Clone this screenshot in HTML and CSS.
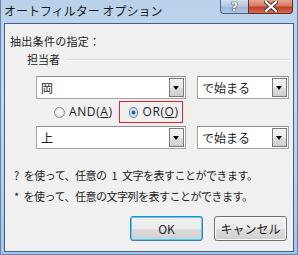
FILE: index.html
```html
<!DOCTYPE html>
<html lang="ja">

<head>
    <meta charset="UTF-8">
    <meta name="viewport" content="width=device-width, initial-scale=1.0">
    <title>オートフィルター オプション</title>
    <link rel="stylesheet" href="styles.css">
</head>

<body>
    <div class="window">
        <!-- Title bar -->
        <div class="titlebar">
            <span class="title">オートフィルター オプション</span>
            <div class="caption-buttons">
                <div class="cap-btn help">?</div>
                <div class="cap-btn close">
                    <svg width="14" height="11" viewBox="0 0 14 11">
                        <path d="M2 1 L12 10 M12 1 L2 10" stroke="#3a3a3a" stroke-width="4.2" stroke-linecap="square" />
                        <path d="M2 1 L12 10 M12 1 L2 10" stroke="#ffffff" stroke-width="2.2" stroke-linecap="square" />
                    </svg>
                </div>
            </div>
        </div>

        <!-- Client area -->
        <div class="client">
            <p class="label">抽出条件の指定：</p>
            <div class="group-head">
                <span>担当者</span>
                <span class="groove"></span>
            </div>

            <div class="row">
                <div class="combo wide">
                    <span class="value">岡</span>
                    <span class="arrow"></span>
                </div>
                <div class="combo narrow">
                    <span class="value">で始まる</span>
                    <span class="arrow"></span>
                </div>
            </div>

            <div class="radios">
                <label class="radio">
                    <span class="dot"></span>
                    <span>AND(<u>A</u>)</span>
                </label>
                <label class="radio checked highlight">
                    <span class="dot"></span>
                    <span>OR(<u>O</u>)</span>
                </label>
            </div>

            <div class="row">
                <div class="combo wide">
                    <span class="value">上</span>
                    <span class="arrow"></span>
                </div>
                <div class="combo narrow">
                    <span class="value">で始まる</span>
                    <span class="arrow"></span>
                </div>
            </div>

            <div class="notes">
                <p>? を使って、任意の 1 文字を表すことができます。</p>
                <p>* を使って、任意の文字列を表すことができます。</p>
            </div>

            <div class="buttons">
                <button class="btn default">OK</button>
                <button class="btn">キャンセル</button>
            </div>
        </div>
    </div>
</body>

</html>
```

FILE: styles.css
```css
body {
    margin: 0;
    font-family: "Noto Sans CJK JP", "Noto Sans", sans-serif;
    font-size: 11px;
    color: #1e1e1e;
    overflow: hidden;
}

p {
    margin: 0;
}

/* Window frame */
.window {
    width: 298px;
    height: 255px;
    box-sizing: border-box;
    border: 1px solid #5f84b8;
    border-top: none;
    background: linear-gradient(to bottom, #b9d1ea 0%, #c4d8ee 40%, #a9c4e6 100%);
    display: flex;
    flex-direction: column;
}

.titlebar {
    height: 22px;
    display: flex;
    justify-content: space-between;
    align-items: flex-start;
    padding-left: 3px;
}

.title {
    font-size: 12px;
    line-height: 16px;
    margin-top: 3px;
    color: #1b1b1b;
}

.caption-buttons {
    display: flex;
    margin-right: 4px;
}

.cap-btn {
    height: 14px;
    box-sizing: border-box;
    border: 1px solid #4d6488;
    border-top: none;
    display: flex;
    justify-content: center;
    align-items: center;
}

.help {
    width: 28px;
    border-radius: 0 0 0 4px;
    border-right: none;
    background: linear-gradient(to bottom, #d3e0f0 0%, #b3c6e0 50%, #9cb4d6 51%, #b0c6e3 100%);
    color: #ffffff;
    font-family: "DejaVu Sans", sans-serif;
    font-weight: bold;
    font-size: 12px;
    line-height: 12px;
    text-shadow: 0 0 1px #2d3b52, 0 0 1px #2d3b52, 0 0 1px #2d3b52;
}

.close {
    width: 45px;
    border-radius: 0 0 4px 0;
    background: linear-gradient(to bottom, #e8a593 0%, #d77a62 45%, #c0402a 55%, #d4694f 100%);
    border-color: #6e2a22;
}

.client {
    flex: 1;
    margin: 1px 3px 2px 3px;
    border: 1px solid #3f5f8e;
    background: #f0f0f0;
    padding: 9px 0 0 5px;
}

.label {
    line-height: 16px;
    letter-spacing: 0.3px;
}

.group-head {
    display: flex;
    align-items: center;
    margin-top: 2px;
    padding-left: 17px;
    line-height: 16px;
}

.groove {
    flex: 1;
    height: 0;
    border-top: 1px solid #d5dfe5;
    border-bottom: 1px solid #ffffff;
    margin: 2px 3px 0 6px;
}

/* Combo boxes */
.row {
    display: flex;
    gap: 11px;
    padding-left: 26px;
}

.group-head + .row {
    margin-top: 9px;
}

.combo {
    height: 23px;
    box-sizing: border-box;
    border: 1px solid #a4a4a4;
    border-top-color: #8e8e8e;
    background: #ffffff;
    display: flex;
    align-items: center;
    justify-content: space-between;
    padding: 1px;
}

.wide {
    width: 150px;
}

.narrow {
    width: 92px;
}

.value {
    font-size: 12px;
    padding-left: 3px;
    line-height: 16px;
}

.arrow {
    width: 15px;
    height: 19px;
    box-sizing: border-box;
    border: 1px solid #7a7a7a;
    background: linear-gradient(to bottom, #f2f2f2 0%, #ebebeb 50%, #dddddd 51%, #cfcfcf 100%);
    position: relative;
}

.arrow::after {
    content: "";
    position: absolute;
    left: 3px;
    top: 7px;
    border-left: 3.5px solid transparent;
    border-right: 3.5px solid transparent;
    border-top: 4px solid #000000;
}

/* Radio buttons */
.radios {
    display: flex;
    align-items: center;
    gap: 6px;
    padding-left: 44px;
    margin-top: 2px;
    margin-bottom: 3px;
    height: 22px;
}

.radio {
    display: flex;
    align-items: center;
    gap: 4px;
    font-family: "Open Sans", "Noto Sans", sans-serif;
    font-size: 12px;
    line-height: 16px;
    letter-spacing: 0.6px;
}

.dot {
    width: 11px;
    height: 11px;
    box-sizing: border-box;
    border-radius: 50%;
    border: 1px solid #8f8f8f;
    background: radial-gradient(circle at 50% 40%, #ffffff 0%, #e6e6e6 55%, #cfcfcf 100%);
}

.checked .dot {
    border-color: #5f7f9f;
    background: radial-gradient(circle, #1b75c8 0%, #1c5f9b 25%, #6ea7d6 32%, #e3e9ef 45%, #d4d9df 100%);
}

.highlight {
    height: 22px;
    box-sizing: border-box;
    border: 1.5px solid #e8222c;
    padding: 0 3px 0 9px;
    width: 64px;
}

.radio u {
    text-underline-offset: 1px;
}

/* Notes */
.notes {
    margin-top: 16px;
    padding-left: 4px;
    line-height: 21px;
    letter-spacing: -0.5px;
    word-spacing: 3px;
}

/* Buttons */
.buttons {
    display: flex;
    justify-content: flex-end;
    gap: 11px;
    margin-top: 9px;
    padding-right: 6px;
}

.btn {
    width: 73px;
    height: 25px;
    font-family: "Noto Sans CJK JP", "Noto Sans", sans-serif;
    font-size: 12px;
    color: #1e1e1e;
    border: 1px solid #707070;
    border-radius: 3px;
    background: linear-gradient(to bottom, #f2f2f2 0%, #ebebeb 50%, #dddddd 51%, #cfcfcf 100%);
    box-shadow: inset 0 0 0 1px #fcfcfc;
    padding: 0;
}

.btn.default {
    border-color: #3c7fb1;
    box-shadow: inset 0 0 0 1px #48d2fa;
}
```
